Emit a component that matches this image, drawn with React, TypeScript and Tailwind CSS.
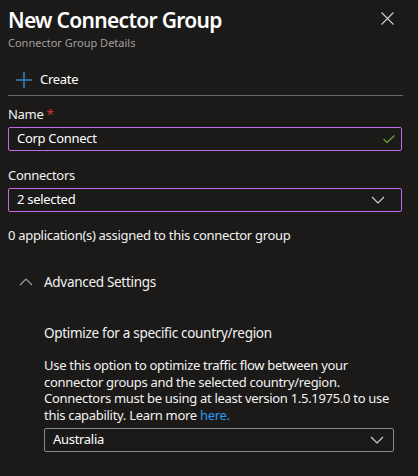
const font = { fontFamily: '"Noto Sans", "Open Sans", sans-serif' }

function Chevron({ up = false, className = "" }: { up?: boolean; className?: string }) {
  return (
    <svg width="14" height="8" viewBox="0 0 14 8" className={className} fill="none">
      <polyline
        points={up ? "1,7 7,1 13,7" : "1,1 7,7 13,1"}
        stroke="currentColor"
        strokeWidth="1.2"
      />
    </svg>
  )
}

export default function App() {
  return (
    <div className="h-[476px] w-[418px] overflow-hidden bg-[#1b1a19] text-[#f3f2f1] tracking-[-0.3px]" style={font}>
      {/* Header */}
      <div className="flex items-start justify-between pl-2 pr-[24px] pt-[5px]">
        <div>
          <h1 className="text-[21px] font-semibold leading-[30px] tracking-[-0.7px] text-white">New Connector Group</h1>
          <p className="mt-[1px] text-[11px] leading-[14px] tracking-normal text-[#a19f9d]">Connector Group Details</p>
        </div>
        <svg width="13" height="13" viewBox="0 0 13 13" className="mt-[7px] text-[#d2d0ce]">
          <path d="M0.5 0.5 L12.5 12.5 M12.5 0.5 L0.5 12.5" stroke="currentColor" strokeWidth="1.1" />
        </svg>
      </div>

      {/* Command bar */}
      <div className="mx-2 mr-[15px] mt-[14px] flex h-[32px] items-center gap-[8px] border-b border-[#6a6867] pl-[8px]">
        <svg width="16" height="16" viewBox="0 0 16 16" className="text-[#3a82c8]">
          <path d="M8 0 V16 M0 8 H16" stroke="currentColor" strokeWidth="1.5" />
        </svg>
        <span className="text-[13px] text-white">Create</span>
      </div>

      {/* Form */}
      <div className="pl-2 pr-[16px] pt-[10px]">
        <label className="block text-[13px] leading-[17px]">
          Name <span className="text-[#e0323b]">*</span>
        </label>
        <div className="mt-[4px] flex h-[24px] items-center justify-between rounded-[2px] border border-[#c56be8] pl-[8px] pr-[6px]">
          <span className="text-[13px] text-white">Corp Connect</span>
          <svg width="12" height="8" viewBox="0 0 12 8" className="text-[#6a9e38]" fill="none">
            <polyline points="0.5,4 4,7.5 11.5,0.5" stroke="currentColor" strokeWidth="1.3" />
          </svg>
        </div>

        <label className="mt-[16px] block text-[13px] leading-[17px]">Connectors</label>
        <div className="mt-[4px] flex h-[24px] items-center justify-between rounded-[2px] border border-[#c56be8] pl-[8px] pr-[16px]">
          <span className="text-[13px] text-white">2 selected</span>
          <Chevron className="text-[#d2d0ce]" />
        </div>

        <p className="mt-[15px] text-[13px] leading-[17px]">0 application(s) assigned to this connector group</p>
      </div>

      {/* Advanced */}
      <div className="mt-[28px] flex h-[20px] items-center gap-[11px] pl-[19px]">
        <Chevron up className="text-[#a19f9d]" />
        <span className="text-[13.5px]">Advanced Settings</span>
      </div>

      <div className="pl-[44px] pr-[24px] pt-[32px]">
        <p className="text-[13.5px] leading-[18px]">Optimize for a specific country/region</p>
        <p className="mt-[15px] text-[13px] leading-[16.7px]">
          Use this option to optimize traffic flow between your connector groups and the selected country/region.
          Connectors must be using at least version 1.5.1975.0 to use this capability. Learn more{" "}
          <a className="text-[#2899f5]">here.</a>
        </p>
        <div className="mt-[4px] flex h-[24px] w-[350px] items-center justify-between rounded-[2px] border border-[#8a8886] pl-[8px] pr-[9px]">
          <span className="text-[13px] text-white">Australia</span>
          <Chevron className="text-[#d2d0ce]" />
        </div>
      </div>
    </div>
  )
}
